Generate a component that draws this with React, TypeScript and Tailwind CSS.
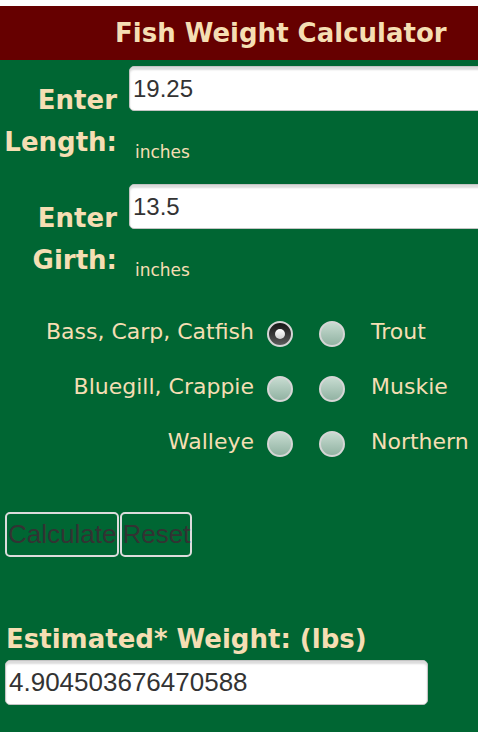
import React from 'react';

const sans = "font-['DejaVu_Sans',Verdana,sans-serif]";
const arial = "font-['Liberation_Sans',Arial,sans-serif]";

const fishRows: [string, string, boolean][] = [
  ['Bass, Carp, Catfish', 'Trout', true],
  ['Bluegill, Crappie', 'Muskie', false],
  ['Walleye', 'Northern', false],
];

function Radio({ checked }: { checked?: boolean }) {
  if (checked) {
    return (
      <span className="flex h-[26px] w-[26px] shrink-0 items-center justify-center rounded-full border-2 border-[#d6d6d6] bg-linear-to-b from-[#161616] to-[#5c5c5c]">
        <span className="block h-[10px] w-[10px] rounded-full bg-linear-to-b from-white to-[#d2d2d2]" />
      </span>
    );
  }
  return (
    <span className="block h-[26px] w-[26px] shrink-0 rounded-full border-2 border-[#d6d6d6] bg-linear-to-b from-[#c6dbd0] to-[#92b3a3]" />
  );
}

function TextBox({ value, className }: { value: string; className: string }) {
  return (
    <div
      className={`flex h-[45px] items-center rounded-[5px] border border-[#c4c4c4] bg-white pl-[3px] text-[#333333] shadow-[inset_0_3px_2px_rgba(0,0,0,0.14)] ${arial} ${className}`}
    >
      {value}
    </div>
  );
}

function FieldRow({ name, value }: { name: string; value: string }) {
  return (
    <div className="flex h-[118px] pt-[6px]">
      <div className={`w-[117px] shrink-0 pt-[13px] text-right text-[26px] font-bold leading-[42px] text-[#f5deb3] ${sans}`}>
        <div>Enter</div>
        <div>{name}:</div>
      </div>
      <div className="ml-[12px] flex flex-col">
        <TextBox value={value} className="w-[380px] text-[24px]" />
        <span className={`ml-[6px] mt-[31px] text-[17px] leading-[20px] text-[#f5deb3] ${sans}`}>inches</span>
      </div>
    </div>
  );
}

export default function App() {
  return (
    <div className="min-h-screen w-full overflow-hidden bg-[#006633]">
      <div className="h-[6px] bg-white" />
      <div className={`flex h-[54px] items-center bg-[#660000] pl-[115px] text-[26px] font-bold text-[#f5deb3] ${sans}`}>
        Fish Weight Calculator
      </div>

      <FieldRow name="Length" value="19.25" />
      <FieldRow name="Girth" value="13.5" />

      <div className={`mt-[10px] flex flex-col text-[22px] text-[#f5deb3] ${sans}`}>
        {fishRows.map(([left, right, checked]) => (
          <div key={left} className="flex h-[55px] items-center">
            <span className="mb-[5px] w-[254px] shrink-0 text-right">{left}</span>
            <span className="ml-[13px] flex">
              <Radio checked={checked} />
            </span>
            <span className="ml-[26px] flex">
              <Radio />
            </span>
            <span className="mb-[5px] ml-[26px]">{right}</span>
          </div>
        ))}
      </div>

      <div className={`ml-[5px] mt-[41px] flex gap-[1px] text-[26px] text-[#333333] ${arial}`}>
        <button className="h-[45px] rounded-[5px] border-2 border-[#dcdcdc] px-[1px]">Calculate</button>
        <button className="h-[45px] rounded-[5px] border-2 border-[#dcdcdc] px-0">Reset</button>
      </div>

      <div className={`ml-[6px] mt-[67px] text-[26px] font-bold leading-[30px] text-[#f5deb3] ${sans}`}>
        Estimated* Weight: (lbs)
      </div>
      <TextBox value="4.904503676470588" className="ml-[5px] mt-[6px] w-[423px] text-[26px]" />
    </div>
  );
}
